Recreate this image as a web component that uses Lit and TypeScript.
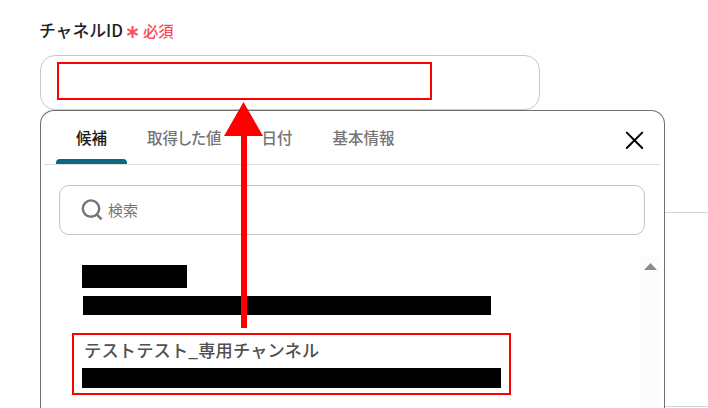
import { css, html, LitElement } from 'lit';
import { customElement, property, state } from 'lit/decorators.js';
import { classMap } from 'lit/directives/class-map.js';

/**
 *  @element suggestion-panel
 * @description - Dropdown with tabs, a search field and a list of candidates.
 */
@customElement('suggestion-panel')
export class SuggestionPanelElement extends LitElement {
  static styles = [
    css`
      :host {
        display: flex;
        flex-direction: column;
        box-sizing: border-box;
        padding: 0 4px 0 3px;
        border: 1px solid #707070;
        border-bottom: 0;
        border-radius: 14px 14px 0 0;
        background: #fff;
      }

      .header {
        display: flex;
        box-sizing: border-box;
        height: 54px;
        padding-left: 12px;
        border-bottom: 1px solid #dedede;
      }

      .tab {
        display: flex;
        flex-direction: column;
        height: 53px;
        padding: 0;
        border: 0;
        background: none;
        color: #757575;
        font: inherit;
        font-feature-settings: 'palt';
        font-size: 15.5px;
        font-weight: 500;
        white-space: nowrap;
      }

      .tab span {
        padding: 0 20px;
        line-height: 53px;
      }

      .tab.active {
        color: #1a1a1a;
      }

      .tab.active::after {
        content: '';
        width: 100%;
        height: 5px;
        margin-top: -5px;
        border-radius: 4px 4px 0 0;
        background: #0b6880;
      }

      .close {
        width: 20px;
        height: 20px;
        margin: 19px 15px 0 auto;
        stroke: #000;
        stroke-width: 2;
        stroke-linecap: round;
      }

      .search {
        display: flex;
        align-items: center;
        gap: 5px;
        box-sizing: border-box;
        height: 50px;
        margin: 20px 15px 0;
        padding: 0 0 2px 21px;
        border: 1px solid #c4c4c4;
        border-radius: 10px;
        color: #757575;
        font-size: 15px;
      }

      .search svg {
        width: 22px;
        height: 22px;
        margin-top: 2px;
        fill: none;
        stroke: #757575;
        stroke-width: 2.4;
      }

      .body {
        display: flex;
        flex: 1;
        min-height: 0;
        margin-top: 20px;
      }

      .list {
        flex: 1;
        padding: 10px 0 0 38px;
      }

      .name {
        padding-left: 2px;
        height: 53px;
        color: #505050;
        font-size: 17.2px;
        font-weight: 500;
        line-height: 69px;
        letter-spacing: 0.2px;
        white-space: nowrap;
      }

      .mask {
        background: #000;
      }

      .mask.title {
        width: 105px;
        height: 23px;
      }

      .mask.detail {
        width: 408px;
        height: 19px;
        margin: 8px 0 0 1px;
      }

      .mask.selected {
        width: 419px;
        height: 20px;
      }

      .scrollbar {
        width: 19px;
        background: #fcfcfc;
      }

      .scrollbar svg {
        display: block;
        width: 13px;
        height: 7px;
        margin: 8px 0 0 3px;
        fill: #8b8b8b;
      }
    `,
  ];

  @property({ attribute: false })
  tabs: string[] = [];

  @state()
  private _active = 0;

  private _renderTab(label: string, index: number) {
    return html`<button
      class=${classMap({ tab: true, active: index === this._active })}
      @click=${() => (this._active = index)}>
      <span>${label}</span>
    </button>`;
  }

  render() {
    return html`
      <div class="header">
        ${this.tabs.map((label, index) => this._renderTab(label, index))}
        <svg class="close" viewBox="0 0 20 20">
          <path d="M1.8 2.6 17.2 18M17.2 2.6 1.8 18" />
        </svg>
      </div>
      <div class="search">
        <svg viewBox="0 0 22 22">
          <circle cx="10" cy="9.6" r="8.2" />
          <path d="M15.4 15.2 20.6 20.4" />
        </svg>
        <span>検索</span>
      </div>
      <div class="body">
        <div class="list">
          <div class="mask title"></div>
          <div class="mask detail"></div>
          <div class="name">テストテスト_専用チャンネル</div>
          <div class="mask selected"></div>
        </div>
        <div class="scrollbar">
          <svg viewBox="0 0 13 7"><path d="M6.5 0 13 7H0z" /></svg>
        </div>
      </div>
    `;
  }
}

@customElement('app-root')
export class AppRootElement extends LitElement {
  static styles = [
    css`
      :host {
        display: flex;
        position: relative;
        box-sizing: border-box;
        width: 708px;
        height: 408px;
        overflow: hidden;
        background: #fff;
        font-family: 'Noto Sans CJK JP', sans-serif;
      }

      .form {
        display: flex;
        flex-direction: column;
        width: 625px;
        padding-left: 40px;
      }

      .label {
        display: flex;
        align-items: center;
        gap: 4px;
        height: 55px;
        margin-left: -1px;
        padding-top: 5px;
        box-sizing: border-box;
        color: #222;
        font-size: 16.8px;
        font-weight: 500;
      }

      .required {
        display: flex;
        align-items: center;
        gap: 5px;
        color: #ff4757;
        font-size: 15.3px;
      }

      .required svg {
        width: 11px;
        height: 12px;
        margin-top: 4px;
        stroke: currentColor;
        stroke-width: 2;
      }

      .input {
        box-sizing: border-box;
        width: 500px;
        height: 55px;
        border: 1px solid #c8c8c8;
        border-radius: 15px;
      }

      suggestion-panel {
        flex: 1;
      }

      .backdrop {
        flex: 1;
        box-sizing: border-box;
        height: 195px;
        margin-top: 212px;
        border: solid #cbd3df;
        border-width: 1px 0;
      }

      /* red markers laid over the form */
      .frame {
        position: absolute;
        box-sizing: border-box;
        border: 2px solid #f00;
      }

      .frame.target {
        left: 57px;
        top: 62px;
        width: 375px;
        height: 38px;
      }

      .frame.source {
        left: 72px;
        top: 333px;
        width: 439px;
        height: 62px;
      }

      .arrow {
        position: absolute;
        left: 224px;
        top: 102px;
        width: 39px;
        height: 226px;
        fill: #f00;
      }
    `,
  ];

  private _tabs = ['候補', '取得した値', '日付', '基本情報'];

  render() {
    return html`
      <div class="form">
        <div class="label">
          <span>チャネルID</span>
          <span class="required">
            <svg viewBox="0 0 11 12">
              <path d="M5.5 0V12M.4 3 10.6 9M10.6 3 .4 9" />
            </svg>
            必須
          </span>
        </div>
        <div class="input"></div>
        <suggestion-panel .tabs=${this._tabs}></suggestion-panel>
      </div>
      <div class="backdrop"></div>
      <div class="frame target"></div>
      <div class="frame source"></div>
      <svg class="arrow" viewBox="0 0 39 226">
        <path d="M19.5 0 39 34H23V226H17V34H0z" />
      </svg>
    `;
  }
}
